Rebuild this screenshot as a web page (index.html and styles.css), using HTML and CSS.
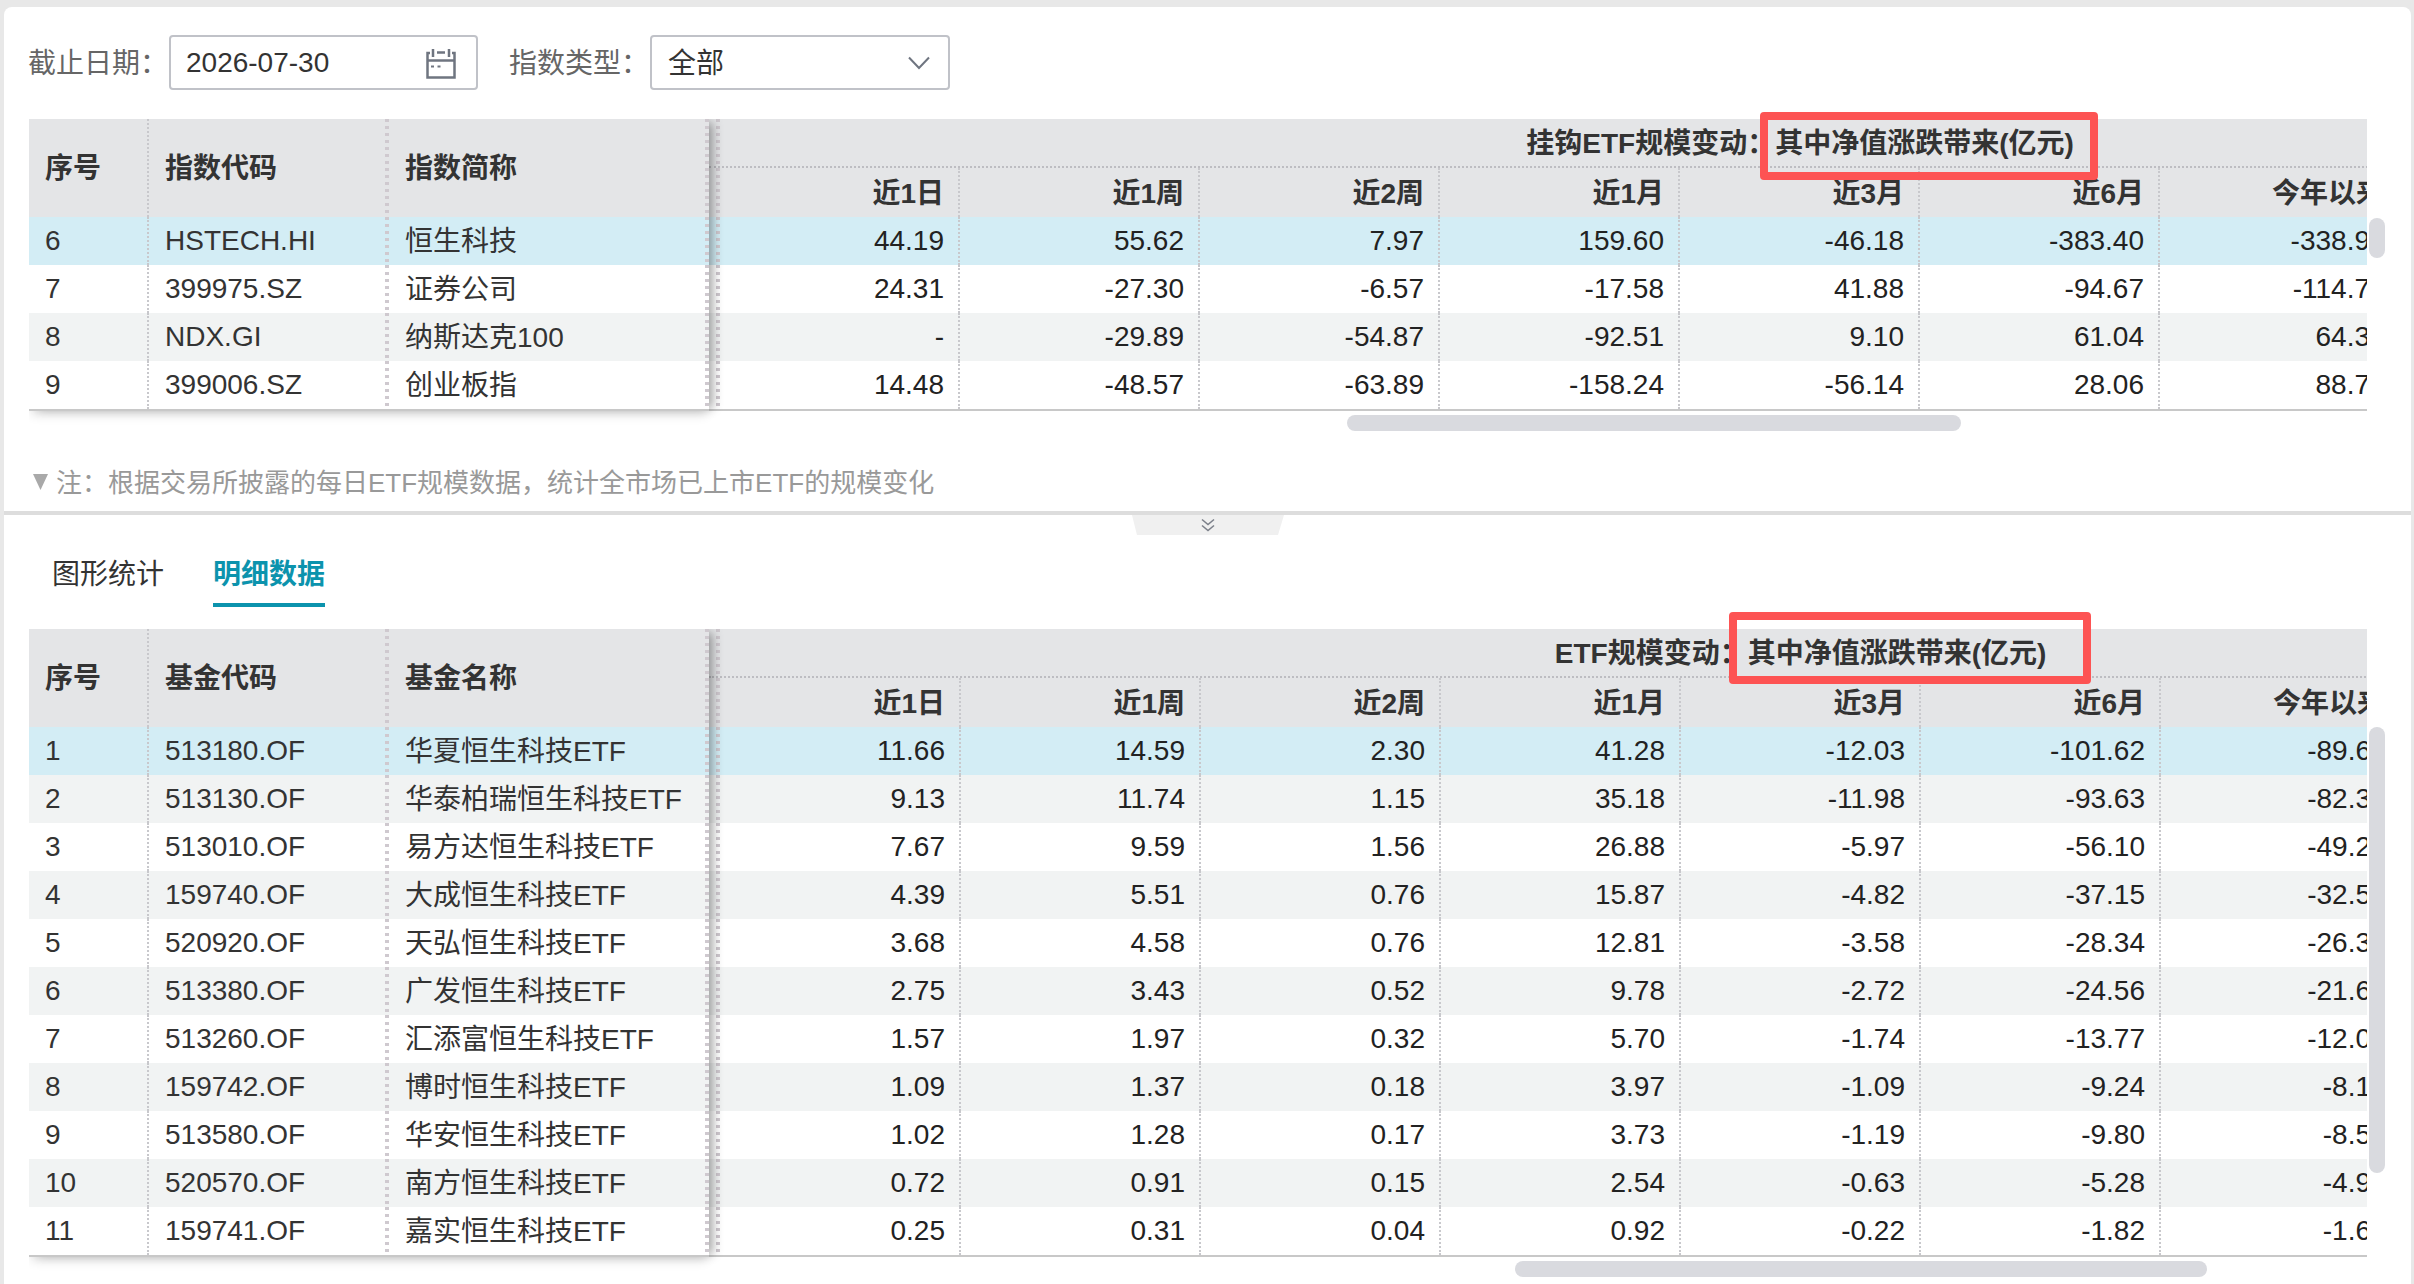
FILE: index.html
```html
<!DOCTYPE html>
<html lang="zh-CN">
<head>
    <meta charset="UTF-8">
    <title>ETF规模变动</title>
    <link rel="stylesheet" href="styles.css">
</head>
<body>
    <div class="page">
        <section class="panel panel-top">
            <div class="filters">
                <label class="filter-label">截止日期：</label>
                <div class="field field-date">
                    <span>2026-07-30</span>
                    <svg class="icon-calendar" width="30" height="30" viewBox="0 0 30 30" fill="none" stroke="#6f7580" stroke-width="2.5">
                        <path d="M4 4H1.5V28.5H28.5V4H26"/>
                        <path d="M11 3.5H19"/>
                        <path d="M7 0V8M23 0V8"/>
                        <path d="M1.5 11.5H28.5"/>
                        <path d="M5 17.5H8M11.5 17.5H14.5" stroke-width="2"/>
                    </svg>
                </div>
                <label class="filter-label">指数类型：</label>
                <div class="field field-select">
                    <span class="cjk-value">全部</span>
                    <svg width="22" height="14" viewBox="0 0 22 14" fill="none" stroke="#6f7580" stroke-width="2">
                        <path d="M1 1.5L11 12L21 1.5"/>
                    </svg>
                </div>
            </div>

            <div class="grid grid-a">
                <div class="fixed">
                    <table>
                        <colgroup><col class="col-no"><col class="col-code"><col class="col-name"></colgroup>
                        <thead>
                            <tr><th>序号</th><th>指数代码</th><th>指数简称</th></tr>
                        </thead>
                        <tbody>
                            <tr class="active"><td>6</td><td>HSTECH.HI</td><td>恒生科技</td></tr>
                            <tr><td>7</td><td>399975.SZ</td><td>证券公司</td></tr>
                            <tr class="stripe"><td>8</td><td>NDX.GI</td><td>纳斯达克100</td></tr>
                            <tr><td>9</td><td>399006.SZ</td><td>创业板指</td></tr>
                        </tbody>
                    </table>
                </div>
                <div class="scroller">
                    <table>
                        <colgroup><col class="col-first"><col span="8" class="col-num"></colgroup>
                        <thead>
                            <tr><th class="group-title" colspan="9">挂钩ETF规模变动：其中净值涨跌带来(亿元)</th></tr>
                            <tr class="periods"><th>近1日</th><th>近1周</th><th>近2周</th><th>近1月</th><th>近3月</th><th>近6月</th><th>今年以来</th><th></th><th></th></tr>
                        </thead>
                        <tbody>
                            <tr class="active"><td>44.19</td><td>55.62</td><td>7.97</td><td>159.60</td><td>-46.18</td><td>-383.40</td><td>-338.9</td></tr>
                            <tr><td>24.31</td><td>-27.30</td><td>-6.57</td><td>-17.58</td><td>41.88</td><td>-94.67</td><td>-114.7</td></tr>
                            <tr class="stripe"><td>-</td><td>-29.89</td><td>-54.87</td><td>-92.51</td><td>9.10</td><td>61.04</td><td>64.3</td></tr>
                            <tr><td>14.48</td><td>-48.57</td><td>-63.89</td><td>-158.24</td><td>-56.14</td><td>28.06</td><td>88.7</td></tr>
                        </tbody>
                    </table>
                </div>
                <div class="vbar"><div class="vbar-thumb"></div></div>
                <div class="red-box"></div>
            </div>
            <div class="hbar"><div class="hbar-thumb"></div></div>

            <div class="note">
                <svg width="15" height="16" viewBox="0 0 15 16"><path d="M0 0H15L7.5 16Z" fill="#a9a9a9"/></svg>
                <span>注：根据交易所披露的每日ETF规模数据，统计全市场已上市ETF的规模变化</span>
            </div>
        </section>

        <section class="panel panel-bottom">
            <svg class="collapse" width="152" height="20" viewBox="0 0 152 20">
                <path d="M0 0H152L146 20H5Z" fill="#f0f0f0"/>
                <path d="M70 4.5L76 9.5L82 4.5M70 10.5L76 15.5L82 10.5" fill="none" stroke="#7c808a" stroke-width="1.6"/>
            </svg>
            <div class="tabs">
                <div class="tab">图形统计</div>
                <div class="tab tab-on">明细数据</div>
            </div>

            <div class="grid grid-b">
                <div class="fixed">
                    <table>
                        <colgroup><col class="col-no"><col class="col-code"><col class="col-name"></colgroup>
                        <thead>
                            <tr><th>序号</th><th>基金代码</th><th>基金名称</th></tr>
                        </thead>
                        <tbody>
                            <tr class="active"><td>1</td><td>513180.OF</td><td>华夏恒生科技ETF</td></tr>
                            <tr class="stripe"><td>2</td><td>513130.OF</td><td>华泰柏瑞恒生科技ETF</td></tr>
                            <tr><td>3</td><td>513010.OF</td><td>易方达恒生科技ETF</td></tr>
                            <tr class="stripe"><td>4</td><td>159740.OF</td><td>大成恒生科技ETF</td></tr>
                            <tr><td>5</td><td>520920.OF</td><td>天弘恒生科技ETF</td></tr>
                            <tr class="stripe"><td>6</td><td>513380.OF</td><td>广发恒生科技ETF</td></tr>
                            <tr><td>7</td><td>513260.OF</td><td>汇添富恒生科技ETF</td></tr>
                            <tr class="stripe"><td>8</td><td>159742.OF</td><td>博时恒生科技ETF</td></tr>
                            <tr><td>9</td><td>513580.OF</td><td>华安恒生科技ETF</td></tr>
                            <tr class="stripe"><td>10</td><td>520570.OF</td><td>南方恒生科技ETF</td></tr>
                            <tr><td>11</td><td>159741.OF</td><td>嘉实恒生科技ETF</td></tr>
                        </tbody>
                    </table>
                </div>
                <div class="scroller">
                    <table>
                        <colgroup><col class="col-first"><col span="8" class="col-num"></colgroup>
                        <thead>
                            <tr><th class="group-title" colspan="9">ETF规模变动：其中净值涨跌带来(亿元)</th></tr>
                            <tr class="periods"><th>近1日</th><th>近1周</th><th>近2周</th><th>近1月</th><th>近3月</th><th>近6月</th><th>今年以来</th><th></th><th></th></tr>
                        </thead>
                        <tbody>
                            <tr class="active"><td>11.66</td><td>14.59</td><td>2.30</td><td>41.28</td><td>-12.03</td><td>-101.62</td><td>-89.6</td></tr>
                            <tr class="stripe"><td>9.13</td><td>11.74</td><td>1.15</td><td>35.18</td><td>-11.98</td><td>-93.63</td><td>-82.3</td></tr>
                            <tr><td>7.67</td><td>9.59</td><td>1.56</td><td>26.88</td><td>-5.97</td><td>-56.10</td><td>-49.2</td></tr>
                            <tr class="stripe"><td>4.39</td><td>5.51</td><td>0.76</td><td>15.87</td><td>-4.82</td><td>-37.15</td><td>-32.5</td></tr>
                            <tr><td>3.68</td><td>4.58</td><td>0.76</td><td>12.81</td><td>-3.58</td><td>-28.34</td><td>-26.3</td></tr>
                            <tr class="stripe"><td>2.75</td><td>3.43</td><td>0.52</td><td>9.78</td><td>-2.72</td><td>-24.56</td><td>-21.6</td></tr>
                            <tr><td>1.57</td><td>1.97</td><td>0.32</td><td>5.70</td><td>-1.74</td><td>-13.77</td><td>-12.0</td></tr>
                            <tr class="stripe"><td>1.09</td><td>1.37</td><td>0.18</td><td>3.97</td><td>-1.09</td><td>-9.24</td><td>-8.1</td></tr>
                            <tr><td>1.02</td><td>1.28</td><td>0.17</td><td>3.73</td><td>-1.19</td><td>-9.80</td><td>-8.5</td></tr>
                            <tr class="stripe"><td>0.72</td><td>0.91</td><td>0.15</td><td>2.54</td><td>-0.63</td><td>-5.28</td><td>-4.9</td></tr>
                            <tr><td>0.25</td><td>0.31</td><td>0.04</td><td>0.92</td><td>-0.22</td><td>-1.82</td><td>-1.6</td></tr>
                        </tbody>
                    </table>
                </div>
                <div class="vbar"><div class="vbar-thumb"></div></div>
                <div class="red-box"></div>
            </div>
            <div class="hbar"><div class="hbar-thumb"></div></div>
        </section>
    </div>
</body>
</html>
```

FILE: styles.css
```css
* {
    box-sizing: border-box;
}
body {
    margin: 0;
    background-color: #e8e8e8;
    color: #333;
    font-family: "Liberation Sans", "Noto Sans CJK SC", sans-serif;
    font-size: 28px;
    overflow: hidden;
}
.page {
    width: 2414px;
    height: 1284px;
    padding: 7px 3px 0 4px;
}
.panel {
    background-color: #fff;
    padding-left: 24px;
    padding-right: 26px;
}
.panel-top {
    height: 504px;
    padding-top: 28px;
    border-radius: 8px 8px 0 0;
}
.panel-bottom {
    position: relative;
    height: 773px;
    padding-top: 38px;
    border-top: 4px solid #ddd;
}

/* filters */
.filters {
    display: flex;
    align-items: center;
    height: 55px;
    margin-bottom: 29px;
}
.filter-label {
    width: 141px;
    padding-bottom: 3px;
    color: #666;
    white-space: nowrap;
}
.field {
    display: flex;
    align-items: center;
    justify-content: space-between;
    height: 55px;
    border: 2px solid #c0c2c8;
    border-radius: 4px;
    color: #333;
}
.field-date {
    width: 309px;
    margin-right: 31px;
    padding: 0 20px 0 15px;
}
.icon-calendar {
    margin-top: 2px;
}
.field-select {
    width: 300px;
    padding: 0 18px 0 16px;
}
.cjk-value {
    padding-bottom: 3px;
}

/* tables */
.grid {
    position: relative;
    display: flex;
}
.fixed {
    position: relative;
    z-index: 1;
    flex: none;
    width: 680px;
    margin-left: 1px;
    box-shadow: 7px 0 10px -3px rgba(0, 0, 0, 0.32), 0 6px 10px -2px rgba(0, 0, 0, 0.12);
    clip-path: inset(0 -30px -30px 0);
}
.scroller {
    flex: none;
    width: 1658px;
    overflow: hidden;
}
table {
    table-layout: fixed;
    border-collapse: separate;
    border-spacing: 0;
    border-bottom: 2px solid #c8c8c8;
}
.fixed table {
    width: 680px;
}
.scroller table {
    width: 2171px;
}
.grid-b .scroller table {
    width: 2172px;
}
.col-no {
    width: 120px;
}
.col-code {
    width: 240px;
}
.col-name {
    width: 320px;
}
.col-first {
    width: 251px;
}
.grid-b .col-first {
    width: 252px;
}
.col-num {
    width: 240px;
}
thead {
    background-color: #e4e5e7;
}
th {
    height: 49px;
    padding: 0 14px 3px 16px;
    font-weight: bold;
    color: #333;
    white-space: nowrap;
    overflow: hidden;
}
td {
    height: 48px;
    padding: 0 14px 0 16px;
    white-space: nowrap;
    overflow: hidden;
}
tr.active {
    background-color: #d3edf5;
}
tr.stripe {
    background-color: #f1f3f3;
}

/* fixed side */
.fixed th {
    height: 98px;
    padding-bottom: 5px;
    text-align: left;
}
.fixed th:first-child,
.fixed td:first-child {
    padding-left: 16px;
    border-right: 2px dotted #c8c8cc;
}
.fixed td:nth-child(3) {
    padding-bottom: 4px;
}
.fixed th:nth-child(2),
.fixed td:nth-child(2),
.fixed th:nth-child(3),
.fixed td:nth-child(3) {
    background-image: linear-gradient(#cfc9cf 50%, transparent 50%);
    background-size: 4px 7px;
    background-position: right top;
    background-repeat: repeat-y;
}

/* scrolling side */
.scroller td {
    text-align: right;
    color: #222;
    border-right: 2px dotted #c8c8cc;
}
.scroller td:nth-child(7) {
    padding-right: 30px;
    border-right: none;
}
.group-title {
    padding: 0 0 3px 11px;
    text-align: center;
    border-bottom: 2px dotted #bdbdc2;
    background-image: linear-gradient(#cfc9cf 50%, transparent 50%);
    background-size: 4px 7px;
    background-position: 7px 0;
    background-repeat: repeat-y;
}
.periods th {
    text-align: right;
    border-right: 2px dotted #c8c8cc;
}
.periods th:first-child,
.scroller td:first-child {
    background-image: linear-gradient(#cfc9cf 50%, transparent 50%);
    background-size: 4px 7px;
    background-position: 7px 0;
    background-repeat: repeat-y;
}

/* scrollbars */
.vbar {
    flex: none;
    width: 16px;
    margin-left: 2px;
}
.vbar-thumb {
    width: 16px;
    border-radius: 8px;
    background-color: #d9dadf;
}
.grid-a .vbar-thumb {
    height: 40px;
    margin-top: 99px;
}
.grid-b .vbar-thumb {
    height: 446px;
    margin-top: 98px;
}
.hbar {
    height: 16px;
    margin-top: 4px;
}
.hbar-thumb {
    height: 16px;
    border-radius: 8px;
    background-color: #d9dadf;
}
.grid-a + .hbar .hbar-thumb {
    width: 614px;
    margin-left: 1319px;
}
.grid-b + .hbar .hbar-thumb {
    width: 692px;
    margin-left: 1487px;
}

/* red marks over the headers */
.red-box {
    position: absolute;
    z-index: 2;
    border: 8px solid #fd5353;
    border-radius: 4px;
}
.grid-a .red-box {
    top: -7px;
    left: 1732px;
    width: 338px;
    height: 68px;
}
.grid-b .red-box {
    top: -17px;
    left: 1701px;
    width: 362px;
    height: 72px;
}

/* note */
.note {
    display: flex;
    align-items: center;
    gap: 8px;
    height: 30px;
    margin-top: 36px;
    padding-left: 5px;
    color: #999;
    font-size: 26px;
}
.note span {
    padding-bottom: 3px;
}

/* lower panel */
.collapse {
    position: absolute;
    top: 0;
    left: 1128px;
}
.tabs {
    display: flex;
    gap: 49px;
    height: 54px;
    margin-bottom: 22px;
    padding-left: 24px;
}
.tab {
    width: 112px;
    height: 54px;
    line-height: 43px;
    white-space: nowrap;
}
.tab-on {
    color: #0c93ad;
    font-weight: bold;
    border-bottom: 4px solid #0c93ad;
}
```
